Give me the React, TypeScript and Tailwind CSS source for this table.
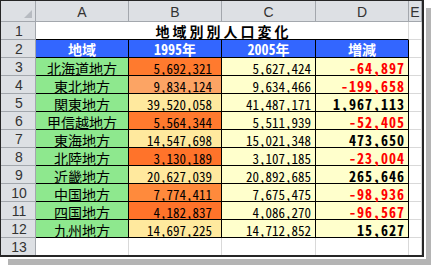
import React from "react"

const jp = "font-['Noto_Sans_CJK_JP',sans-serif]"
const num = "font-['Noto_Sans_CJK_JP',sans-serif] [font-feature-settings:'hwid']"
const hd = "font-['Liberation_Sans',Arial,sans-serif] text-[14px] leading-none text-[#333] bg-[#dde0e4] border-r border-b border-[#a3a7ad] flex items-end justify-center"
const grid = "border-r border-b border-[#d9d9d9] bg-white"

const rows = [
  ["北海道地方", "5,692,321", "bg-[#ff7a2e]", "5,627,424", "-64,897"],
  ["東北地方", "9,834,124", "bg-[#fca464]", "9,634,466", "-199,658"],
  ["関東地方", "39,520,058", "bg-[#ffe99e]", "41,487,171", "1,967,113"],
  ["甲信越地方", "5,564,344", "bg-[#ff7a2e]", "5,511,939", "-52,405"],
  ["東海地方", "14,547,698", "bg-[#ffe99e]", "15,021,348", "473,650"],
  ["北陸地方", "3,130,189", "bg-[#ff732a]", "3,107,185", "-23,004"],
  ["近畿地方", "20,627,039", "bg-[#ffe99e]", "20,892,685", "265,646"],
  ["中国地方", "7,774,411", "bg-[#ff8a3c]", "7,675,475", "-98,936"],
  ["四国地方", "4,182,837", "bg-[#ff732a]", "4,086,270", "-96,567"],
  ["九州地方", "14,697,225", "bg-[#ffe99e]", "14,712,852", "15,627"],
]

export default function App() {
  return (
    <div className="w-[431px] h-[266px] bg-white">
      <div className="w-[424px] h-[257px] border-t border-l border-r-2 border-b-2 border-[#262626] overflow-hidden shadow-[2px_2px_0_#fff,8px_8px_0_#b4b4b4]">
        <div className="grid grid-cols-[35px_93px_93px_94px_93px_13px] grid-rows-[21px_repeat(13,18px)]">
          {/* column headers */}
          <div className={`${hd} !items-end !justify-end p-[3px]`}>
            <svg width="8" height="8" viewBox="0 0 8 8">
              <polygon points="8,0 8,8 0,8" fill="#b7bbc1" />
            </svg>
          </div>
          {["A", "B", "C", "D", "E"].map((c) => (
            <div key={c} className={`${hd} pb-[2px]`}>{c}</div>
          ))}

          {/* row 1: title */}
          <div className={`${hd} pb-[1px] pl-[2px]`}>1</div>
          <div className={`${jp} col-span-4 flex items-end justify-center pb-[1px] pl-[3px] bg-white border-r border-[#d9d9d9] border-b border-b-black text-[14px] leading-none font-bold tracking-[3px] text-black`}>
            地域別別人口変化
          </div>
          <div className={grid}></div>

          {/* row 2: table header */}
          <div className={`${hd} pb-[1px] pl-[2px]`}>2</div>
          {["地域", "1995年", "2005年", "増減"].map((t) => (
            <div key={t} className={`${num} flex items-end justify-center pb-[1px] bg-[#3366ff] border-r border-b border-black text-white font-bold text-[14px] leading-none`}>
              {t}
            </div>
          ))}
          <div className={grid}></div>

          {rows.map((r, i) => (
            <React.Fragment key={r[0]}>
              <div className={`${hd} pb-[1px] pl-[2px]`}>{i + 3}</div>
              <div className={`${jp} flex items-end justify-center bg-[#8ee88e] border-r border-b border-black text-[14px] leading-none text-black`}>
                {r[0]}
              </div>
              <div className={`${num} ${r[2]} flex items-end justify-end pr-[9px] border-r border-b border-black text-[13px] leading-none text-black`}>
                {r[1]}
              </div>
              <div className={`${num} flex items-end justify-end pr-[4px] bg-[#ffffcc] border-r border-b border-black text-[13px] leading-none text-black`}>
                {r[3]}
              </div>
              <div className={`${num} flex items-end justify-end pr-[3px] bg-[#ffffcc] border-r border-b border-black text-[14px] leading-none font-bold tracking-[1px] ${r[4].startsWith("-") ? "text-[#ff0000]" : "text-black"}`}>
                {r[4]}
              </div>
              <div className={grid}></div>
            </React.Fragment>
          ))}

          {/* row 13 */}
          <div className={`${hd} pb-[1px] pl-[2px]`}>13</div>
          <div className={grid}></div>
          <div className={grid}></div>
          <div className={grid}></div>
          <div className={grid}></div>
          <div className={grid}></div>
        </div>
      </div>
    </div>
  )
}
